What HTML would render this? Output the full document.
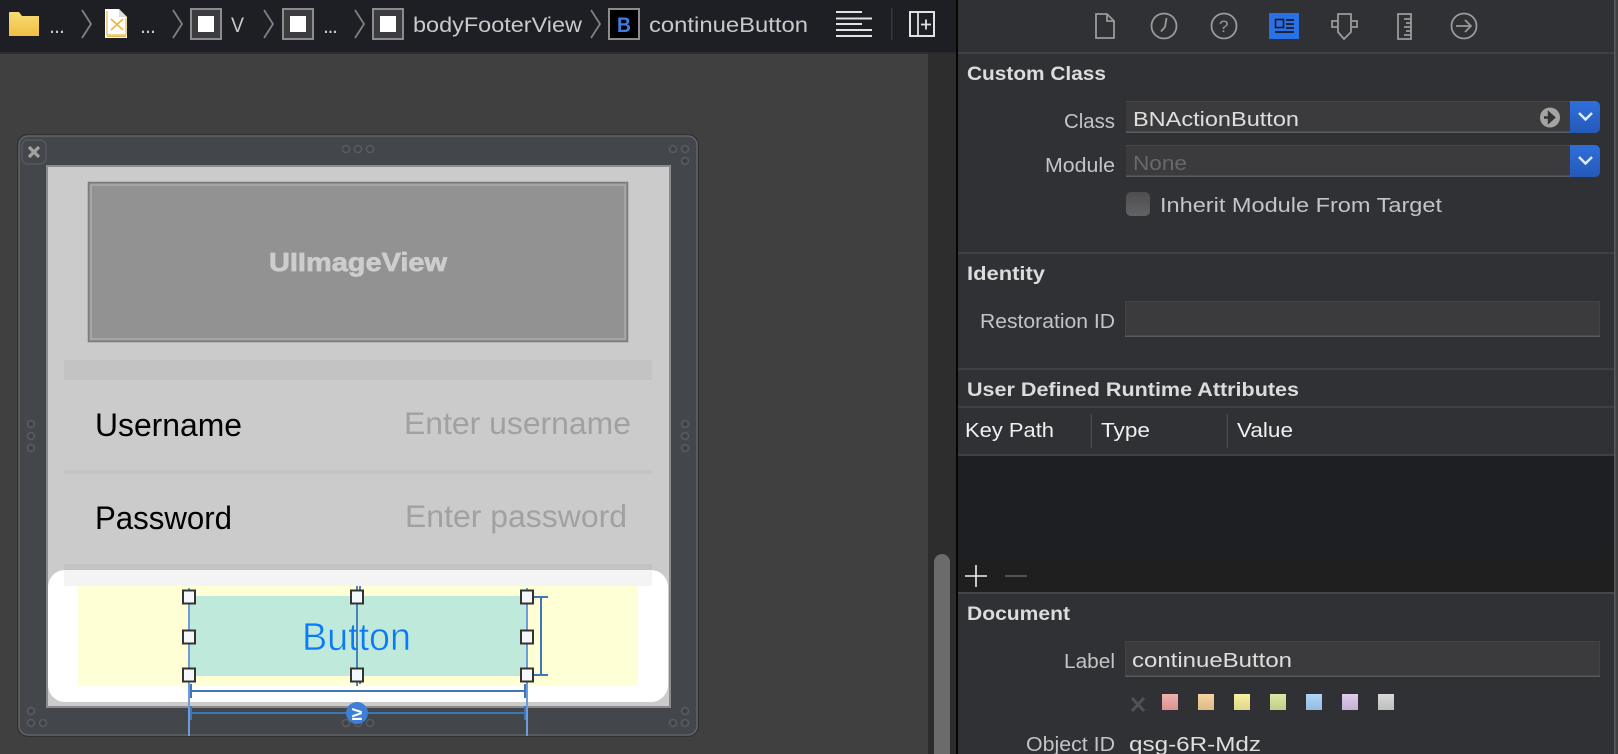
<!DOCTYPE html>
<html><head><meta charset="utf-8"><style>
html,body{margin:0;padding:0;width:1618px;height:754px;overflow:hidden;background:#404040}
svg{display:block}
text{font-family:"Liberation Sans",sans-serif}
.tb{font-size:21.500px;fill:#c9c9c9}
.lb{font-size:20px;fill:#c4c4c6}
.h{font-size:19.500px;font-weight:bold;fill:#dcdcdc}
.v{font-size:20.500px;fill:#dedede}
.th{font-size:20.500px;fill:#f0f0f0}
</style></head><body>
<svg width="1618" height="754" viewBox="0 0 1618 754" xmlns="http://www.w3.org/2000/svg">
<defs>
<linearGradient id="fold" x1="0" y1="0" x2="0" y2="1"><stop offset="0" stop-color="#f8da72"/><stop offset="1" stop-color="#efc044"/></linearGradient>
<linearGradient id="blue" x1="0" y1="0" x2="0" y2="1"><stop offset="0" stop-color="#2f6fdc"/><stop offset="1" stop-color="#2459b8"/></linearGradient>
<linearGradient id="chk" x1="0" y1="0" x2="0" y2="1"><stop offset="0" stop-color="#4e4e51"/><stop offset="1" stop-color="#626265"/></linearGradient>
<linearGradient id="shade" x1="0" y1="0" x2="0" y2="1"><stop offset="0" stop-color="#fff" stop-opacity=".12"/><stop offset="1" stop-color="#000" stop-opacity=".1"/></linearGradient>
<g id="dot"><circle r="3.600" fill="#43464b" stroke="#595c60" stroke-width="1.400"/><circle r="1" fill="#36383c"/></g>
<g id="box"><rect x="1" y="1" width="30" height="30" fill="#3c3c3e" stroke="#8c8c8e" stroke-width="2"/><rect x="8" y="8" width="16" height="16" fill="#fff"/></g>
<path id="chev" d="M0 0L9 14L0 28" fill="none" stroke="#808080" stroke-width="1.800"/>
<g id="hd"><rect x="-6" y="-6.500" width="12" height="13" fill="#f4f8fd" stroke="#333" stroke-width="2"/></g>
</defs>

<!-- canvas -->
<rect x="0" y="0" width="1618" height="754" fill="#404040"/>
<rect x="928" y="54" width="28" height="700" fill="#2d2d2d"/>
<rect x="934" y="554" width="16" height="210" rx="8" fill="#6b6b6b"/>

<!-- toolbar -->
<rect x="0" y="0" width="956" height="52" fill="#1e1f24"/>
<rect x="0" y="52" width="928" height="2" fill="#2e2e31"/>
<rect x="928" y="52" width="28" height="2" fill="#2a2a2c"/>

<path d="M9 13a1 1 0 0 1 1-1h9l3 4h17v20h-30z" fill="url(#fold)"/>
<text class="tb" x="49" y="33" textLength="16">...</text>
<use href="#chev" x="82" y="10"/>
<path d="M105 9h14l8 8v21h-22z" fill="#fff"/>
<path d="M119 9l8 8h-8z" fill="#dcdcdc"/>
<path d="M107 11v24h19M107 36.500h19M126 18v17" fill="none" stroke="#e8b94a" stroke-width="1.200"/>
<path d="M111 19l12 11M123 19l-12 11" stroke="#e8b94a" stroke-width="1.800"/>
<text class="tb" x="140" y="33" textLength="16">...</text>
<use href="#chev" x="173" y="10"/>
<use href="#box" x="190" y="8"/>
<text class="tb" x="231" y="32" textLength="13" lengthAdjust="spacingAndGlyphs">V</text>
<use href="#chev" x="264" y="10"/>
<use href="#box" x="282" y="8"/>
<text class="tb" x="323" y="33" textLength="15">...</text>
<use href="#chev" x="355" y="10"/>
<use href="#box" x="372" y="8"/>
<text class="tb" x="413" y="32" textLength="169" lengthAdjust="spacingAndGlyphs">bodyFooterView</text>
<use href="#chev" x="591" y="10"/>
<rect x="609" y="9" width="30" height="30" fill="#000" stroke="#8c8c8e" stroke-width="2"/>
<text x="617" y="32" font-size="21" font-weight="bold" fill="#3f7be6" textLength="14" lengthAdjust="spacingAndGlyphs">B</text>
<text class="tb" x="649" y="32" textLength="159" lengthAdjust="spacingAndGlyphs">continueButton</text>
<path d="M836 12h26M836 18.500h36M836 24h26M836 30h36M836 36h36" stroke="#e2e2e2" stroke-width="2"/>
<rect x="891" y="8" width="1.500" height="32" fill="#35363a"/>
<rect x="910" y="12" width="24" height="24" fill="none" stroke="#e2e2e2" stroke-width="2"/>
<path d="M918 12v24M921 24.500h10M926 19.500v10" stroke="#e2e2e2" stroke-width="1.800" fill="none"/>

<!-- device frame -->
<rect x="17" y="134" width="682" height="603" rx="11" fill="#2f3033"/>
<rect x="19" y="136" width="678" height="599" rx="9" fill="#43464b" stroke="#636568" stroke-width="1.500"/>
<rect x="22" y="140" width="24" height="24" rx="6" fill="#43464b" stroke="#55585d" stroke-width="1.500"/>
<path d="M29 147l10 10M39 147l-10 10" stroke="#a3a3a3" stroke-width="3.200"/>
<use href="#dot" x="346" y="149"/><use href="#dot" x="358" y="149"/><use href="#dot" x="370" y="149"/>
<use href="#dot" x="673" y="149"/><use href="#dot" x="685" y="149"/><use href="#dot" x="685" y="161"/>
<use href="#dot" x="31" y="424"/><use href="#dot" x="31" y="436"/><use href="#dot" x="31" y="448"/>
<use href="#dot" x="685" y="424"/><use href="#dot" x="685" y="436"/><use href="#dot" x="685" y="448"/>
<use href="#dot" x="31" y="711"/><use href="#dot" x="31" y="723"/><use href="#dot" x="43" y="723"/>
<use href="#dot" x="685" y="711"/><use href="#dot" x="685" y="723"/><use href="#dot" x="673" y="723"/>
<use href="#dot" x="346" y="723"/><use href="#dot" x="358" y="723"/><use href="#dot" x="370" y="723"/>

<!-- content -->
<rect x="47" y="166" width="623" height="541" fill="#cbcbcb" stroke="#8b8b8b" stroke-width="2"/>
<rect x="88.500" y="182.500" width="539" height="159" fill="#929292" stroke="#7b7b7b" stroke-width="1.500"/>
<rect x="91" y="185" width="534" height="154" fill="none" stroke="#ababab" stroke-width="1.500"/>
<text x="269" y="271" font-size="26" font-weight="bold" fill="#cdcdcd" stroke="#cdcdcd" stroke-width=".7" textLength="178" lengthAdjust="spacingAndGlyphs">UIImageView</text>
<rect x="64" y="360" width="588" height="20" fill="#c3c3c3"/>
<rect x="64" y="470" width="588" height="4" fill="#c3c3c3"/>
<text x="95" y="436" font-size="32" fill="#000" textLength="147" lengthAdjust="spacingAndGlyphs">Username</text>
<text x="404" y="434" font-size="31.500" fill="#a1a1a1" textLength="227" lengthAdjust="spacingAndGlyphs">Enter username</text>
<text x="95" y="529" font-size="32" fill="#000" textLength="137" lengthAdjust="spacingAndGlyphs">Password</text>
<text x="405" y="527" font-size="31.500" fill="#a1a1a1" textLength="222" lengthAdjust="spacingAndGlyphs">Enter password</text>

<rect x="48" y="570" width="620" height="132" rx="17" fill="#fff"/>
<rect x="64" y="564" width="588" height="22" fill="#000" fill-opacity=".045"/>
<rect x="78" y="586" width="560" height="100" fill="#ffffd5"/>
<rect x="189" y="596" width="338" height="80" fill="#bfe9da"/>
<text x="302" y="650" font-size="39" fill="#0a7bf8" stroke="#bfe9da" stroke-width=".6" paint-order="normal" textLength="109" lengthAdjust="spacingAndGlyphs">Button</text>

<!-- constraints -->
<path d="M189 588V736M527 588V736" stroke="#6f9bd8" stroke-width="2" fill="none"/>
<path d="M357 586V686M360 586V598M360 672V684" stroke="#3f76b8" stroke-width="1.800" fill="none"/>
<path d="M534 597H548M541 597V675M534 675H548" stroke="#3f76b8" stroke-width="2" fill="none"/>
<path d="M191 684V698M191 691H525M525 684V698" stroke="#3f76b8" stroke-width="2" fill="none"/>
<path d="M191 706V720M191 713H525M525 706V720" stroke="#3f76b8" stroke-width="2" fill="none"/>
<ellipse cx="357" cy="713" rx="11" ry="11" fill="#3f7ed8"/>
<text x="357" y="720" font-size="19" font-weight="bold" fill="#fff" text-anchor="middle">≥</text>
<use href="#hd" x="189" y="597"/><use href="#hd" x="357" y="597"/><use href="#hd" x="527" y="597"/>
<use href="#hd" x="189" y="637"/><use href="#hd" x="527" y="637"/>
<use href="#hd" x="189" y="675"/><use href="#hd" x="357" y="675"/><use href="#hd" x="527" y="675"/>

<!-- inspector -->
<rect x="956" y="0" width="2" height="754" fill="#050505"/>
<rect x="958" y="0" width="656" height="754" fill="#303135"/>
<rect x="1614" y="0" width="1.500" height="754" fill="#5a5a5c"/>
<rect x="1615.500" y="0" width="2.500" height="754" fill="#404040"/>
<rect x="958" y="52" width="656" height="2" fill="#3f4044"/>

<g fill="none" stroke="#9a9a9a" stroke-width="1.800">
<path d="M1096 14h11l7 7v17h-18zM1107 14v7h7"/>
<circle cx="1164" cy="26" r="12.500"/><path d="M1166.500 18l-1.500 9-4 4.500"/>
<circle cx="1224" cy="26" r="12.500"/>
<path d="M1332 21h6v-7h13v7h6v6h-6v5l-7 7-6-7v-5h-6zM1338 21v6M1351 21v6"/>
<rect x="1398" y="14" width="13" height="25"/><path d="M1404 19h7M1406 23h5M1404 27h7M1406 31h5M1404 35h7"/>
<circle cx="1464" cy="26" r="12.500"/><path d="M1456 26h15M1465 20l6 6-6 6"/>
</g>
<text x="1219" y="32" font-size="17" fill="#9a9a9a">?</text>
<rect x="1269" y="13" width="30" height="26" fill="#2a70e6"/>
<rect x="1275.500" y="19.500" width="8" height="8" fill="none" stroke="#16191f" stroke-width="1.600"/>
<path d="M1286 20h8M1286 24h8M1286 28h8M1275 32h19" stroke="#16191f" stroke-width="1.800"/>

<text class="h" x="967" y="80" textLength="139" lengthAdjust="spacingAndGlyphs">Custom Class</text>
<text class="lb" x="1064" y="128" textLength="51" lengthAdjust="spacingAndGlyphs">Class</text>
<rect x="1126" y="101" width="444" height="32" fill="#3b3b3d"/>
<rect x="1126" y="101" width="444" height="1" fill="#47474a"/>
<rect x="1126" y="131.500" width="444" height="1.500" fill="#5c5c5f"/>
<text class="v" x="1133" y="126" textLength="166" lengthAdjust="spacingAndGlyphs">BNActionButton</text>
<circle cx="1550" cy="117.500" r="10" fill="#a3a3a3"/>
<path d="M1544 117.500h9M1549 113l5 4.500-5 4.500z" stroke="#333" stroke-width="2.400" fill="#333"/>
<path d="M1570 101h25a5 5 0 0 1 5 5v22a5 5 0 0 1-5 5h-25z" fill="url(#blue)"/>
<path d="M1579 113l6.500 6.500 6.500-6.500" fill="none" stroke="#e4ecfa" stroke-width="2.400"/>

<text class="lb" x="1045" y="172" textLength="70" lengthAdjust="spacingAndGlyphs">Module</text>
<rect x="1126" y="145" width="444" height="32" fill="#3b3b3d"/>
<rect x="1126" y="145" width="444" height="1" fill="#47474a"/>
<rect x="1126" y="175.500" width="444" height="1.500" fill="#5c5c5f"/>
<text x="1133" y="170" font-size="20.500" fill="#68686b" textLength="54" lengthAdjust="spacingAndGlyphs">None</text>
<path d="M1570 145h25a5 5 0 0 1 5 5v22a5 5 0 0 1-5 5h-25z" fill="url(#blue)"/>
<path d="M1579 157l6.500 6.500 6.500-6.500" fill="none" stroke="#e4ecfa" stroke-width="2.400"/>
<rect x="1126" y="192" width="24" height="24" rx="5" fill="url(#chk)"/>
<text class="lb" x="1160" y="212" textLength="282" lengthAdjust="spacingAndGlyphs">Inherit Module From Target</text>

<rect x="958" y="252" width="656" height="2" fill="#3f4044"/>
<text class="h" x="967" y="280" textLength="78" lengthAdjust="spacingAndGlyphs">Identity</text>
<text class="lb" x="980" y="328" textLength="135" lengthAdjust="spacingAndGlyphs">Restoration ID</text>
<rect x="1125.500" y="301.500" width="474" height="35" fill="#3b3b3d" stroke="#434346"/>
<rect x="1125" y="335.500" width="475" height="1.500" fill="#5a5a5d"/>

<rect x="958" y="368" width="656" height="2" fill="#3f4044"/>
<text class="h" x="967" y="396" textLength="332" lengthAdjust="spacingAndGlyphs">User Defined Runtime Attributes</text>
<rect x="958" y="406" width="656" height="2" fill="#3f4044"/>
<text class="th" x="965" y="437" textLength="89" lengthAdjust="spacingAndGlyphs">Key Path</text>
<text class="th" x="1101" y="437" textLength="49" lengthAdjust="spacingAndGlyphs">Type</text>
<text class="th" x="1237" y="437" textLength="56" lengthAdjust="spacingAndGlyphs">Value</text>
<rect x="1090.500" y="414" width="1.500" height="34" fill="#48494d"/>
<rect x="1226.500" y="414" width="1.500" height="34" fill="#48494d"/>
<rect x="958" y="454" width="656" height="2" fill="#3f4044"/>
<rect x="958" y="456" width="656" height="102" fill="#1e1f23"/>
<rect x="958" y="558" width="656" height="34" fill="#1f1f1f"/>
<path d="M965 576h22M976 565v22" stroke="#f0f0f0" stroke-width="1.600"/>
<path d="M1005 576h22" stroke="#5a5a5a" stroke-width="1.800"/>
<rect x="958" y="592" width="656" height="2" fill="#45464a"/>

<text class="h" x="967" y="620" textLength="103" lengthAdjust="spacingAndGlyphs">Document</text>
<text class="lb" x="1064" y="668" textLength="51" lengthAdjust="spacingAndGlyphs">Label</text>
<rect x="1125.500" y="641.500" width="474" height="35" fill="#3b3b3d" stroke="#434346"/>
<rect x="1125" y="675.500" width="475" height="1.500" fill="#5a5a5d"/>
<text class="v" x="1132" y="667" textLength="160" lengthAdjust="spacingAndGlyphs">continueButton</text>
<path d="M1132 698l12 13M1144 698l-12 13" stroke="#505153" stroke-width="3"/>
<rect x="1162" y="694" width="16" height="16" fill="#f2a5a1"/>
<rect x="1198" y="694" width="16" height="16" fill="#f6cf96"/>
<rect x="1234" y="694" width="16" height="16" fill="#f8ef98"/>
<rect x="1270" y="694" width="16" height="16" fill="#d7e59a"/>
<rect x="1306" y="694" width="16" height="16" fill="#a8d0fa"/>
<rect x="1342" y="694" width="16" height="16" fill="#dcc5ea"/>
<rect x="1378" y="694" width="16" height="16" fill="#d4d4d4"/>
<g fill="url(#shade)"><rect x="1162" y="694" width="16" height="16"/><rect x="1198" y="694" width="16" height="16"/><rect x="1234" y="694" width="16" height="16"/><rect x="1270" y="694" width="16" height="16"/><rect x="1306" y="694" width="16" height="16"/><rect x="1342" y="694" width="16" height="16"/><rect x="1378" y="694" width="16" height="16"/></g>
<text class="lb" x="1026" y="751" textLength="89" lengthAdjust="spacingAndGlyphs">Object ID</text>
<text class="v" x="1129" y="751" textLength="132" lengthAdjust="spacingAndGlyphs">qsg-6R-Mdz</text>
</svg>
</body></html>
